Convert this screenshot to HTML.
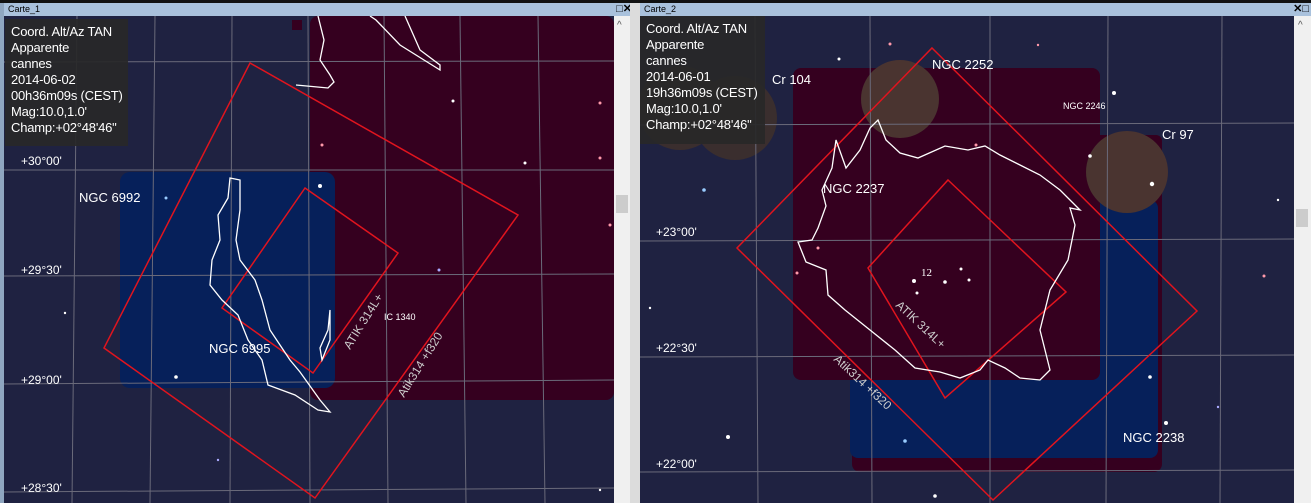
<!DOCTYPE html>
<html><head><style>
html,body{margin:0;padding:0;width:1311px;height:503px;overflow:hidden;background:#000;font-family:"Liberation Sans",sans-serif}
.abs{position:absolute}
.tb{position:absolute;height:13px;background:#a9c1dc;font-size:9px;color:#000;line-height:13px;padding-left:4px;box-sizing:border-box}
.info{position:absolute;background:rgba(40,40,40,0.92);color:#fff;font-size:13px;letter-spacing:-0.2px;line-height:16px;padding:5px 6px 0 6px;box-sizing:border-box;white-space:nowrap;overflow:hidden}
.sb{position:absolute;background:#f0f0f0}
</style></head><body>
<div class="abs" style="left:0;top:0;width:1311px;height:3px;background:#111"></div>
<div class="tb" style="left:4px;top:3px;width:630px">Carte_1<span style="position:absolute;right:2px;top:0;font-weight:bold;font-size:11px">□✕</span></div>
<div class="tb" style="left:640px;top:3px;width:671px">Carte_2<span style="position:absolute;right:2px;top:0;font-weight:bold;font-size:11px">✕□</span></div>
<div class="abs" style="left:0;top:3px;width:4px;height:500px;background:#8fa6c0"></div>
<div class="abs" style="left:630px;top:3px;width:10px;height:500px;background:#dcdcdc"></div>

<svg class="abs" style="left:4px;top:16px" width="610" height="487" viewBox="4 16 610 487">
<rect x="4" y="16" width="610" height="487" fill="#1f2241"/>
<rect x="310" y="16" width="304" height="384" rx="8" fill="#35001f"/>
<rect x="292" y="20" width="10" height="10" fill="#35001f"/>
<rect x="120" y="172" width="215" height="216" rx="10" fill="#06205a"/>
<g stroke="#6a6a7a" stroke-width="1">
<line x1="77" y1="16" x2="72" y2="503"/><line x1="155" y1="16" x2="150" y2="503"/><line x1="232" y1="16" x2="230" y2="503"/><line x1="308" y1="16" x2="310" y2="503"/><line x1="384" y1="16" x2="388" y2="503"/><line x1="460" y1="16" x2="466" y2="503"/><line x1="538" y1="16" x2="545" y2="503"/>
<line x1="4" y1="62" x2="614" y2="61"/><line x1="4" y1="170" x2="614" y2="170"/><line x1="4" y1="276" x2="614" y2="274"/><line x1="4" y1="384" x2="614" y2="380"/><line x1="4" y1="492" x2="614" y2="488"/>
</g>
<g fill="none" stroke="#e0141e" stroke-width="1.5">
<polygon points="250,63 518,215 315,498 104,348"/>
<polygon points="305,188 398,253 313,373 222,308"/>
</g>
<g fill="none" stroke="#fff" stroke-width="1.3">
<path d="M318,16 L324,40 L320,60 L330,75 L334,82 L328,88 L296,85"/>
<path d="M370,16 L376,20 L400,45 L440,70 L440,65 L420,50 L405,16"/>
<path d="M230,178 L240,180 L240,210 L236,240 L240,260 L255,280 L262,300 L270,330 L280,345 L290,360 L300,372 L320,400 L330,412 L318,410 L295,395 L268,385 L262,360 L248,340 L238,315 L222,300 L210,285 L212,260 L220,240 L218,215 L228,198 Z"/>
<path d="M330,310 L328,330 L320,348 L322,360 L330,340 Z"/>
</g>
<g fill="#fff">
<circle cx="320" cy="186" r="2"/><circle cx="166" cy="198" r="1.5" fill="#9cf"/><circle cx="176" cy="377" r="1.8"/><circle cx="453" cy="101" r="1.5"/><circle cx="525" cy="163" r="1.5"/><circle cx="600" cy="103" r="1.5" fill="#f9a"/><circle cx="600" cy="158" r="1.5" fill="#f9a"/><circle cx="322" cy="145" r="1.5" fill="#f9a"/><circle cx="439" cy="270" r="1.5" fill="#aaf"/><circle cx="65" cy="313" r="1.2"/><circle cx="218" cy="460" r="1.2" fill="#aaf"/><circle cx="600" cy="490" r="1.2"/><circle cx="610" cy="225" r="1.5" fill="#f9a"/>
</g>
<g fill="#fff" font-family="Liberation Sans" font-size="13">
<text x="79" y="202">NGC 6992</text><text x="209" y="353">NGC 6995</text>
<text x="384" y="320" font-size="9">IC 1340</text>
<text x="21" y="165" font-size="12">+30°00'</text><text x="21" y="274" font-size="12">+29°30'</text><text x="21" y="384" font-size="12">+29°00'</text><text x="21" y="492" font-size="12">+28°30'</text>
<text x="0" y="0" font-size="12" fill="#ccc" transform="translate(350,350) rotate(-58)">ATIK 314L+</text>
<text x="0" y="0" font-size="12" fill="#ccc" transform="translate(404,398) rotate(-58)">Atik314 +f320</text>
</g>
</svg>
<div class="sb" style="left:614px;top:16px;width:16px;height:487px"><div style="position:absolute;left:3px;top:4px;font-size:10px;color:#555">^</div><div style="position:absolute;left:2px;top:179px;width:12px;height:18px;background:#ccc"></div></div>
<div class="info" style="left:5px;top:19px;width:123px;height:127px">Coord. Alt/Az TAN<br>Apparente<br>cannes<br>2014-06-02<br>00h36m09s (CEST)<br>Mag:10.0,1.0'<br>Champ:+02°48'46"</div>

<svg class="abs" style="left:640px;top:16px" width="654" height="487" viewBox="640 16 654 487">
<rect x="640" y="16" width="654" height="487" fill="#1f2241"/>
<circle cx="680" cy="108" r="42" fill="#3a2e2e"/><circle cx="735" cy="118" r="42" fill="#3a2e2e"/>
<rect x="852" y="380" width="310" height="92" rx="8" fill="#35001f"/>
<rect x="1090" y="135" width="72" height="330" rx="6" fill="#35001f"/>
<rect x="850" y="200" width="308" height="258" rx="8" fill="#06205a"/>
<rect x="793" y="68" width="307" height="312" rx="8" fill="#35001f"/>
<circle cx="900" cy="99" r="39" fill="#4a3430"/>
<circle cx="1127" cy="172" r="41" fill="#4a3430"/>
<g stroke="#6a6a7a" stroke-width="1">
<line x1="755" y1="16" x2="758" y2="503"/><line x1="870" y1="16" x2="872" y2="503"/><line x1="990" y1="16" x2="990" y2="503"/><line x1="1108" y1="16" x2="1106" y2="503"/><line x1="1222" y1="16" x2="1220" y2="503"/>
<line x1="640" y1="125" x2="1294" y2="123"/><line x1="640" y1="241" x2="1294" y2="239"/><line x1="640" y1="357" x2="1294" y2="355"/><line x1="640" y1="472" x2="1294" y2="470"/>
</g>
<g fill="none" stroke="#e0141e" stroke-width="1.5">
<polygon points="932,48 1197,311 993,500 737,248"/>
<polygon points="948,180 1066,292 945,398 868,268"/>
</g>
<path fill="none" stroke="#fff" stroke-width="1.3" d="M836,140 L846,168 L860,150 L870,128 L878,120 L886,140 L900,153 L918,158 L945,146 L968,150 L985,146 L1000,155 L1020,165 L1040,175 L1060,190 L1080,210 L1070,208 L1075,225 L1068,260 L1050,290 L1040,330 L1050,370 L1040,380 L1020,378 L1005,368 L988,360 L980,370 L960,378 L940,372 L915,368 L895,350 L870,330 L845,310 L828,295 L826,270 L806,262 L798,242 L812,240 L818,228 L826,206 L822,190 L832,168 Z"/>
<g fill="#fff">
<circle cx="1114" cy="93" r="2"/><circle cx="1090" cy="156" r="1.8"/><circle cx="1152" cy="184" r="2.2"/><circle cx="704" cy="190" r="1.8" fill="#9cf"/><circle cx="839" cy="59" r="1.5"/><circle cx="890" cy="44" r="1.5" fill="#f9a"/><circle cx="1038" cy="45" r="1.2" fill="#f9a"/><circle cx="728" cy="437" r="2"/><circle cx="905" cy="441" r="1.8" fill="#9cf"/><circle cx="1150" cy="377" r="1.8"/><circle cx="1166" cy="423" r="2"/><circle cx="935" cy="496" r="1.8"/><circle cx="914" cy="281" r="2"/><circle cx="945" cy="282" r="1.8"/><circle cx="961" cy="269" r="1.5"/><circle cx="969" cy="280" r="1.5"/><circle cx="917" cy="293" r="1.5"/><circle cx="797" cy="273" r="1.5" fill="#f9a"/><circle cx="818" cy="248" r="1.5" fill="#f9a"/><circle cx="1264" cy="276" r="1.5" fill="#f9a"/><circle cx="1278" cy="200" r="1.2"/><circle cx="1218" cy="407" r="1.2" fill="#aaf"/><circle cx="650" cy="308" r="1.2"/><circle cx="976" cy="145" r="1.5" fill="#f9a"/>
</g>
<g fill="#fff" font-family="Liberation Sans" font-size="13">
<text x="772" y="84">Cr 104</text><text x="932" y="69">NGC 2252</text><text x="1063" y="109" font-size="9">NGC 2246</text><text x="1162" y="139">Cr 97</text><text x="823" y="193">NGC 2237</text><text x="1123" y="442">NGC 2238</text>
<text x="921" y="276" font-size="11" font-family="Liberation Serif">12</text>
<text x="656" y="236" font-size="12">+23°00'</text><text x="656" y="352" font-size="12">+22°30'</text><text x="656" y="468" font-size="12">+22°00'</text>
<text font-size="12" fill="#ccc" transform="translate(895,306) rotate(43)">ATIK 314L+</text>
<text font-size="12" fill="#ccc" transform="translate(833,360) rotate(43)">Atik314 +f320</text>
</g>
</svg>
<div class="sb" style="left:1294px;top:16px;width:17px;height:487px"><div style="position:absolute;left:4px;top:4px;font-size:10px;color:#555">^</div><div style="position:absolute;left:2px;top:193px;width:12px;height:18px;background:#ccc"></div></div>
<div class="info" style="left:640px;top:16px;width:125px;height:128px">Coord. Alt/Az TAN<br>Apparente<br>cannes<br>2014-06-01<br>19h36m09s (CEST)<br>Mag:10.0,1.0'<br>Champ:+02°48'46"</div>
</body></html>
